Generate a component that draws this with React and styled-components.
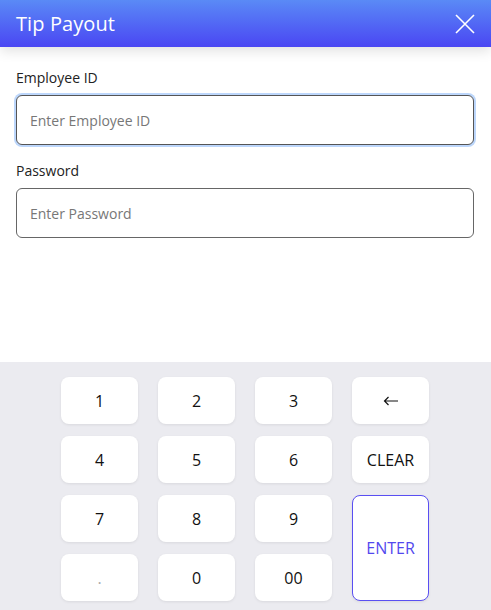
import React from "react";
import styled, { createGlobalStyle } from "styled-components";

const Global = createGlobalStyle`
  html, body {
    margin: 0;
    padding: 0;
    height: 100%;
  }
  body {
    font-family: "Open Sans", "Noto Sans", sans-serif;
    background: #ffffff;
  }
  #root {
    height: 100%;
  }
  * {
    box-sizing: border-box;
  }
`;

const Page = styled.div`
  height: 100%;
  display: flex;
  flex-direction: column;
  background: #ffffff;
`;

const Header = styled.header`
  height: 47px;
  flex-shrink: 0;
  display: flex;
  align-items: center;
  justify-content: space-between;
  padding: 0 16px 0 16px;
  background: linear-gradient(180deg, #5a8af6 0%, #4a46f3 100%);
  box-shadow: 0 4px 12px rgba(0, 0, 0, 0.12);
  position: relative;
  z-index: 1;
`;

const Title = styled.h1`
  margin: 0;
  font-size: 20px;
  font-weight: 400;
  color: #ffffff;
  letter-spacing: 0.1px;
`;

const CloseButton = styled.button`
  border: none;
  background: none;
  padding: 0;
  width: 22px;
  height: 22px;
  display: flex;
  align-items: center;
  justify-content: center;
  cursor: pointer;
  margin-right: -1px;
`;

const Form = styled.div`
  flex: 1;
  padding: 21px 17px 0 16px;
  display: flex;
  flex-direction: column;
`;

const Label = styled.label`
  font-size: 14px;
  color: #222;
  margin-bottom: 7px;
  line-height: 20px;
`;

const Input = styled.input`
  width: 100%;
  height: 50px;
  border: 1px solid ${p => (p.$focused ? "#555" : "#666")};
  border-radius: 6px;
  padding: 0 13px;
  font-family: inherit;
  font-size: 14px;
  color: #333;
  outline: none;
  margin-bottom: ${p => p.$gap}px;
  box-shadow: ${p => (p.$focused ? "0 0 0 2px #bcd6fb" : "none")};

  &::placeholder {
    color: #777;
  }
`;

const Keypad = styled.div`
  flex-shrink: 0;
  background: #ebebf0;
  padding: 15px 0 9px 61px;
  display: flex;
`;

const Grid = styled.div`
  display: grid;
  grid-template-columns: repeat(4, 77px);
  grid-auto-rows: 47px;
  column-gap: 20px;
  row-gap: 12px;
`;

const Key = styled.button`
  border: ${p => (p.$primary ? "1px solid #5a4ff2" : "none")};
  border-radius: 8px;
  background: #ffffff;
  box-shadow: 0 1px 3px rgba(0, 0, 0, 0.08);
  font-family: inherit;
  font-size: 16px;
  color: ${p => (p.$primary ? "#5348ee" : p.$muted ? "#aaa" : "#111")};
  grid-row: ${p => (p.$tall ? "span 2" : "auto")};
  display: flex;
  align-items: center;
  justify-content: center;
  padding: 0;
  cursor: pointer;
`;

const CloseIcon = () => (
  <svg width="20" height="20" viewBox="0 0 20 20">
    <path d="M1 1 L19 19 M19 1 L1 19" stroke="#fff" strokeWidth="1.6" />
  </svg>
);

const BackArrow = () => (
  <svg width="16" height="10" viewBox="0 0 16 10">
    <path
      d="M15 5 H1.5 M5.5 1 L1.5 5 L5.5 9"
      stroke="#111"
      strokeWidth="1.2"
      fill="none"
    />
  </svg>
);

const keys = [
  { label: "1" },
  { label: "2" },
  { label: "3" },
  { label: <BackArrow />, key: "back" },
  { label: "4" },
  { label: "5" },
  { label: "6" },
  { label: "CLEAR" },
  { label: "7" },
  { label: "8" },
  { label: "9" },
  { label: "ENTER", primary: true, tall: true },
  { label: ".", muted: true },
  { label: "0" },
  { label: "00" },
];

const App = () => (
  <Page>
    <Global />
    <Header>
      <Title>Tip Payout</Title>
      <CloseButton aria-label="Close">
        <CloseIcon />
      </CloseButton>
    </Header>
    <Form>
      <Label>Employee ID</Label>
      <Input placeholder="Enter Employee ID" $focused $gap={16} />
      <Label>Password</Label>
      <Input placeholder="Enter Password" type="password" $gap={0} />
    </Form>
    <Keypad>
      <Grid>
        {keys.map((k, i) => (
          <Key
            key={k.key || i}
            $primary={k.primary}
            $tall={k.tall}
            $muted={k.muted}
          >
            {k.label}
          </Key>
        ))}
      </Grid>
    </Keypad>
  </Page>
);

export default App;
